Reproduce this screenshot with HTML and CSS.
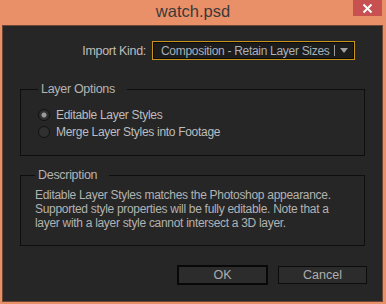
FILE: index.html
```html
<!DOCTYPE html>
<html lang="en">
<head>
    <meta charset="UTF-8">
    <title>watch.psd</title>
    <link rel="stylesheet" href="styles.css">
</head>
<body>
    <div class="window">
        <div class="titlebar">
            <span class="title">watch.psd</span>
            <div class="close">
                <svg width="11" height="11" viewBox="0 0 11 11">
                    <path d="M1.5 1.5 L9.5 9.5 M9.5 1.5 L1.5 9.5" stroke="#ffffff" stroke-width="2"/>
                </svg>
            </div>
        </div>
        <div class="content">
            <div class="import-row">
                <label>Import Kind:</label>
                <div class="select">
                    <span class="select-text">Composition - Retain Layer Sizes</span>
                    <span class="select-sep"></span>
                    <span class="select-arrow"></span>
                </div>
            </div>

            <fieldset class="group options">
                <legend>Layer Options</legend>
                <div class="radio-row">
                    <span class="radio checked"></span>
                    <span>Editable Layer Styles</span>
                </div>
                <div class="radio-row">
                    <span class="radio"></span>
                    <span>Merge Layer Styles into Footage</span>
                </div>
            </fieldset>

            <fieldset class="group description">
                <legend>Description</legend>
                <p>Editable Layer Styles matches the Photoshop appearance.<br>
                Supported style properties will be fully editable. Note that a<br>
                layer with a layer style cannot intersect a 3D layer.</p>
            </fieldset>

            <div class="buttons">
                <button class="btn default">OK</button>
                <button class="btn">Cancel</button>
            </div>
        </div>
    </div>
</body>
</html>
```

FILE: styles.css
```css
body {
    margin: 0;
    padding: 0;
    background-color: #ea9068;
    font-family: "Liberation Sans", Arial, sans-serif;
    width: 386px;
    height: 304px;
    overflow: hidden;
}
.window {
    display: flex;
    flex-direction: column;
    height: 304px;
}
.titlebar {
    height: 25px;
    display: flex;
    justify-content: center;
    align-items: center;
    position: relative;
}
.title {
    font-size: 16.5px;
    color: #3a3a3a;
    margin-top: -2px;
}
.close {
    position: absolute;
    top: 0;
    right: 4px;
    width: 29px;
    height: 16px;
    background-color: #c75050;
    display: flex;
    justify-content: center;
    align-items: center;
}
.content {
    flex: 1;
    margin: 0 3px 2px 2px;
    border: 1px solid #6e4634;
    background-color: #262626;
    color: #bdbdbd;
    font-size: 12px;
    letter-spacing: -0.3px;
    padding: 15px 0 0 17px;
    display: flex;
    flex-direction: column;
}
.import-row {
    display: flex;
    justify-content: flex-end;
    align-items: center;
    gap: 6px;
    margin-right: 27px;
    height: 19px;
}
.import-row label {
    color: #bdbdbd;
    font-size: 12.5px;
}
.select {
    width: 193px;
    height: 17px;
    border: 1px solid #c8941c;
    background-color: #1c1c1c;
    box-shadow: inset 0 0 0 1px #0a0a0a;
    display: flex;
    align-items: center;
    padding: 0 0 0 8px;
    box-sizing: content-box;
}
.select-text {
    flex: 1;
    color: #a9b0b8;
    font-size: 12px;
}
.select-sep {
    width: 1px;
    height: 11px;
    background-color: #9a9a9a;
    margin-right: 5px;
}
.select-arrow {
    width: 0;
    height: 0;
    border-left: 4px solid transparent;
    border-right: 4px solid transparent;
    border-top: 5px solid #a0a0a0;
    margin-right: 6px;
}
.group {
    margin: 0;
    width: 345px;
    border: 1px solid #0e0e0e;
    padding: 0 0 0 3px;
    box-sizing: border-box;
}
.group legend {
    padding: 0 12px 0 3px;
    color: #b4b4b4;
    font-size: 12.5px;
}
.options {
    margin-top: 22px;
    height: 74px;
    padding-top: 10px;
    padding-left: 17px;
}
.radio-row {
    display: flex;
    align-items: center;
    gap: 6px;
    height: 17px;
}
.radio {
    width: 10px;
    height: 10px;
    border-radius: 50%;
    border: 1px solid #111111;
    background-color: #303030;
}
.radio.checked {
    background: radial-gradient(circle, #9a9a9a 0, #9a9a9a 2px, #303030 3px);
}
.description {
    margin-top: 12px;
    height: 78px;
    padding-left: 14px;
}
.description p {
    margin: 6px 0 0 0;
    line-height: 14px;
    color: #b2b2b2;
}
.buttons {
    display: flex;
    justify-content: flex-end;
    gap: 10px;
    margin-top: 20px;
    margin-right: 15px;
}
.btn {
    width: 89px;
    height: 18px;
    font-family: "Liberation Sans", Arial, sans-serif;
    font-size: 12.5px;
    color: #aeaeae;
    background-color: #2c2c2c;
    border: 1px solid #0c0c0c;
    padding: 0;
}
.btn.default {
    width: 91px;
    height: 20px;
    border: 2px solid #080808;
    margin-top: -1px;
}
```
